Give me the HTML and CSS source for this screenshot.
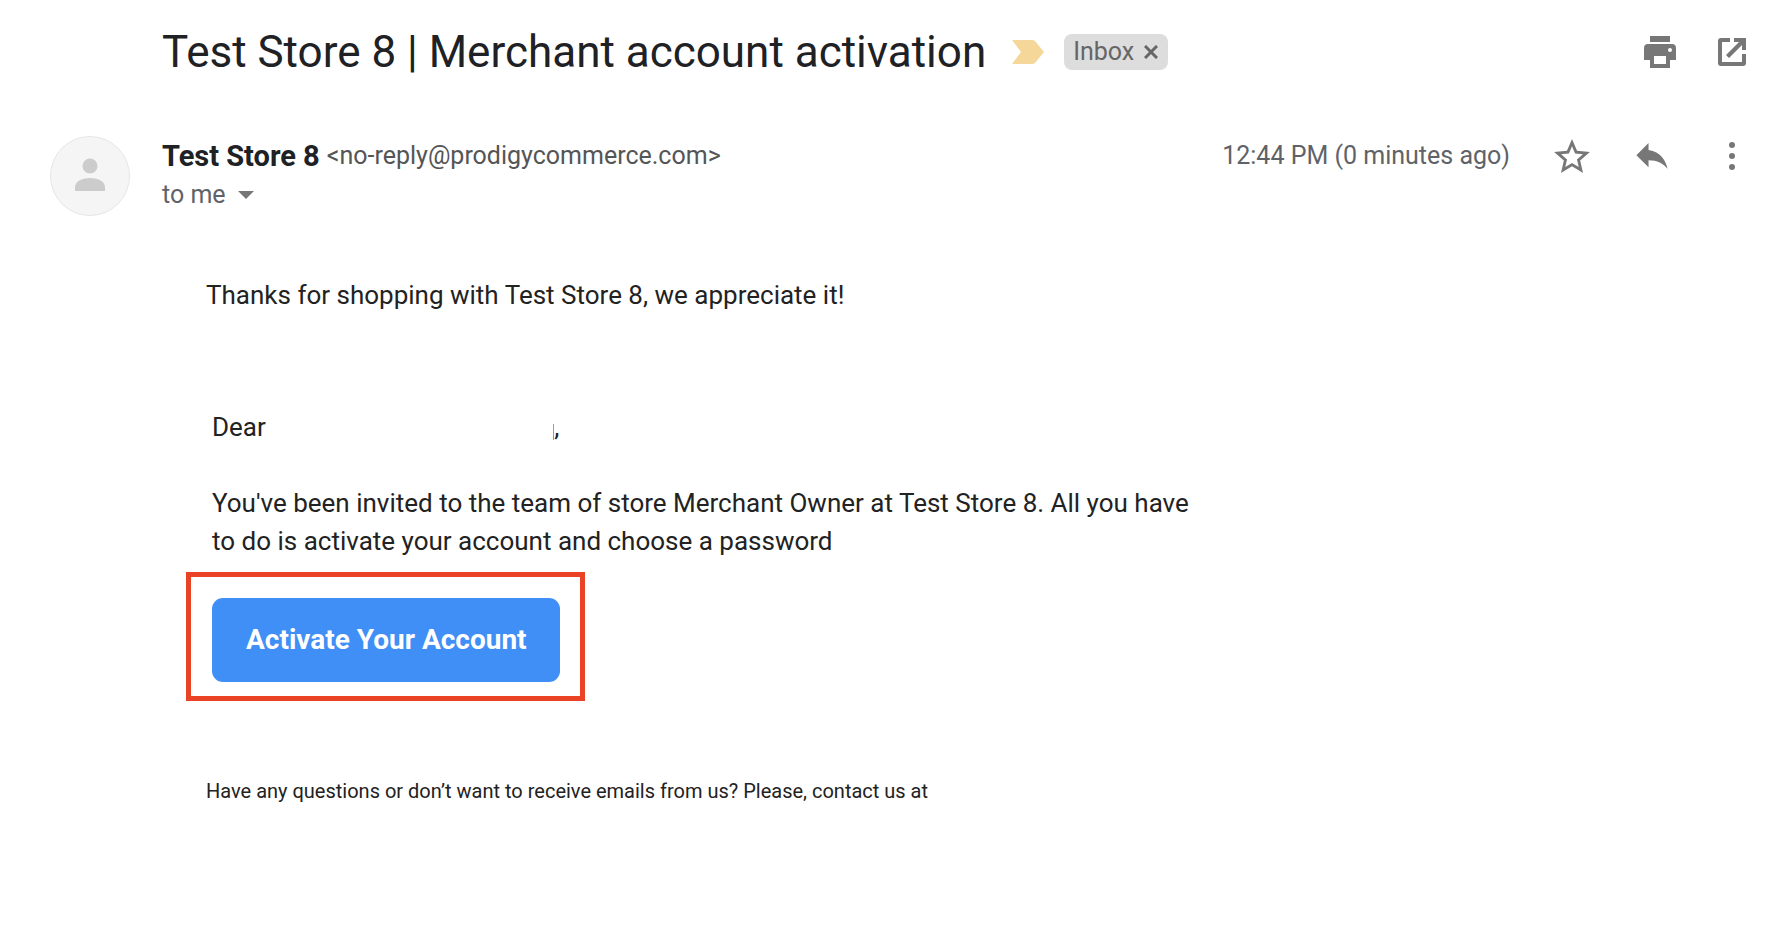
FILE: index.html
```html
<!DOCTYPE html>
<html lang="en">
<head>
    <meta charset="UTF-8">
    <meta name="viewport" content="width=device-width, initial-scale=1.0">
    <title>Test Store 8 | Merchant account activation</title>
    <link rel="stylesheet" href="styles.css">
</head>
<body>
    <header class="subject">
        <h1>Test Store 8 | Merchant account activation</h1>
        <svg class="important" viewBox="0 0 32 24" width="32" height="24">
            <path d="M0 0h20q2 0 3 1l9 11-9 11q-1 1-3 1H0l9-12z"/>
        </svg>
        <span class="label">Inbox
            <button aria-label="Remove label">
                <svg viewBox="0 0 14 14" width="14" height="14"><path d="M1 1l12 12M13 1L1 13" fill="none" stroke="#666" stroke-width="3"/></svg>
            </button>
        </span>
        <div class="actions">
            <button aria-label="Print all">
                <svg viewBox="0 0 32 32" width="32" height="32">
                    <path fill-rule="evenodd" d="M6 0h20v6H6zM4 8h24a4 4 0 0 1 4 4v12h-6v8H6v-8H0V12a4 4 0 0 1 4-4zM10 20v8h12v-8zM26 12a2 2 0 1 0 0 4 2 2 0 0 0 0-4z"/>
                </svg>
            </button>
            <button aria-label="In new window">
                <svg viewBox="0 0 28 28" width="28" height="28">
                    <path d="M12 0v4H4v20h20v-8h4v9a3 3 0 0 1-3 3H3a3 3 0 0 1-3-3V3a3 3 0 0 1 3-3zM16 0h12v12h-4V7L11 20l-3-3L21 4h-5z"/>
                </svg>
            </button>
        </div>
    </header>

    <section class="sender">
        <svg class="avatar" viewBox="0 0 80 80" width="80" height="80">
            <circle cx="40" cy="40" r="39.5" fill="#f5f5f5" stroke="#e6e6e6"/>
            <circle cx="40" cy="30" r="7.5" fill="#ccc"/>
            <path d="M25 55v-4c0-6 8-9 15-9s15 3 15 9v4z" fill="#ccc"/>
        </svg>
        <div class="from">
            <p class="who"><strong>Test Store 8</strong> <span class="email">&lt;no-reply@prodigycommerce.com&gt;</span></p>
            <button class="details">to me
                <svg viewBox="0 0 16 8" width="16" height="8"><path d="M0 0h16L8 8z"/></svg>
            </button>
        </div>
        <div class="meta">
            <time>12:44 PM (0 minutes ago)</time>
            <button aria-label="Not starred">
                <svg viewBox="2 2 20 19" width="36" height="34">
                    <path d="M22 9.24l-7.19-.62L12 2 9.19 8.63 2 9.24l5.46 4.73L5.82 21 12 17.27 18.18 21l-1.63-7.03L22 9.24zM12 15.4l-3.76 2.27 1-4.28-3.32-2.88 4.38-.38L12 6.1l1.71 4.04 4.38.38-3.32 2.88 1 4.28L12 15.4z"/>
                </svg>
            </button>
            <button aria-label="Reply">
                <svg viewBox="3 5 18 15" width="32" height="26">
                    <path d="M10 9V5l-7 7 7 7v-4.1c5 0 8.5 1.6 11 5.1-1-5-4-10-11-11z"/>
                </svg>
            </button>
            <button aria-label="More">
                <svg viewBox="0 0 28 28" width="28" height="28">
                    <circle cx="14" cy="3" r="3"/>
                    <circle cx="14" cy="14" r="3"/>
                    <circle cx="14" cy="25" r="3"/>
                </svg>
            </button>
        </div>
    </section>

    <main class="message">
        <p>Thanks for shopping with Test Store 8, we appreciate it!</p>
        <div class="invite">
            <p>Dear <span class="name"></span>,</p>
            <p class="text">You've been invited to the team of store Merchant Owner at Test Store 8. All you have to do is activate your account and choose a password</p>
            <div class="highlight">
                <a class="activate" href="#">Activate Your Account</a>
            </div>
        </div>
        <p class="small">Have any questions or don’t want to receive emails from us? Please, contact us at</p>
    </main>
</body>
</html>
```

FILE: styles.css
```css
* {
    box-sizing: border-box;
}
body {
    margin: 0;
    padding: 26px 28px 26px 50px;
    background-color: #ffffff;
    font-family: Roboto, Arial, sans-serif;
    font-size: 26px;
    line-height: 38px;
    color: #222222;
}
h1, p {
    margin: 0;
}
button {
    display: inline-flex;
    align-items: center;
    justify-content: center;
    padding: 0;
    border: none;
    background: none;
    font: inherit;
    color: inherit;
    cursor: pointer;
}
svg {
    display: block;
    fill: #777777;
}
.subject {
    display: flex;
    align-items: center;
    padding-left: 112px;
}
.subject h1 {
    font-size: 44px;
    font-weight: 400;
    line-height: 52px;
    color: #202124;
}
.important {
    margin: 0 20px 0 26px;
    fill: #f5d899;
}
.label {
    display: flex;
    align-items: center;
    gap: 10px;
    height: 36px;
    padding: 0 10px 0 9px;
    border-radius: 8px;
    background-color: #dddddd;
    font-size: 25px;
    color: #666666;
}
.actions {
    display: flex;
    gap: 36px;
    margin-left: auto;
}
.actions button,
.meta button {
    width: 36px;
}
.sender {
    display: flex;
    margin-top: 58px;
    color: #5f6368;
}
.from {
    margin-left: 32px;
    font-size: 25px;
}
.who {
    display: flex;
    align-items: center;
    gap: 7px;
    height: 40px;
}
.from strong {
    font-size: 29px;
    color: #202124;
}
.email {
    color: #555555;
}
.details {
    gap: 12px;
}
.meta {
    display: flex;
    align-items: center;
    gap: 44px;
    height: 40px;
    margin-left: auto;
    font-size: 25px;
}
.message {
    padding: 60px 0 0 156px;
}
.invite {
    max-width: 1000px;
    margin-top: 94px;
    padding-left: 6px;
}
/* the recipient's name is left blank */
.name {
    display: inline-block;
    width: 282px;
    height: 16px;
    border-right: 1px solid #7f9ae6;
    vertical-align: -4px;
}
.text {
    margin-top: 38px;
}
.highlight {
    width: fit-content;
    margin: 12px 0 0 -26px;
    padding: 21px 20px 14px 21px;
    border: 5px solid #ea4225;
}
.activate {
    display: block;
    padding: 23px 33px 23px 34px;
    border-radius: 11px;
    background-color: #408ff7;
    font-size: 28px;
    font-weight: 700;
    color: #ffffff;
    text-decoration: none;
}
.small {
    margin-top: 71px;
    font-size: 20px;
}
```
